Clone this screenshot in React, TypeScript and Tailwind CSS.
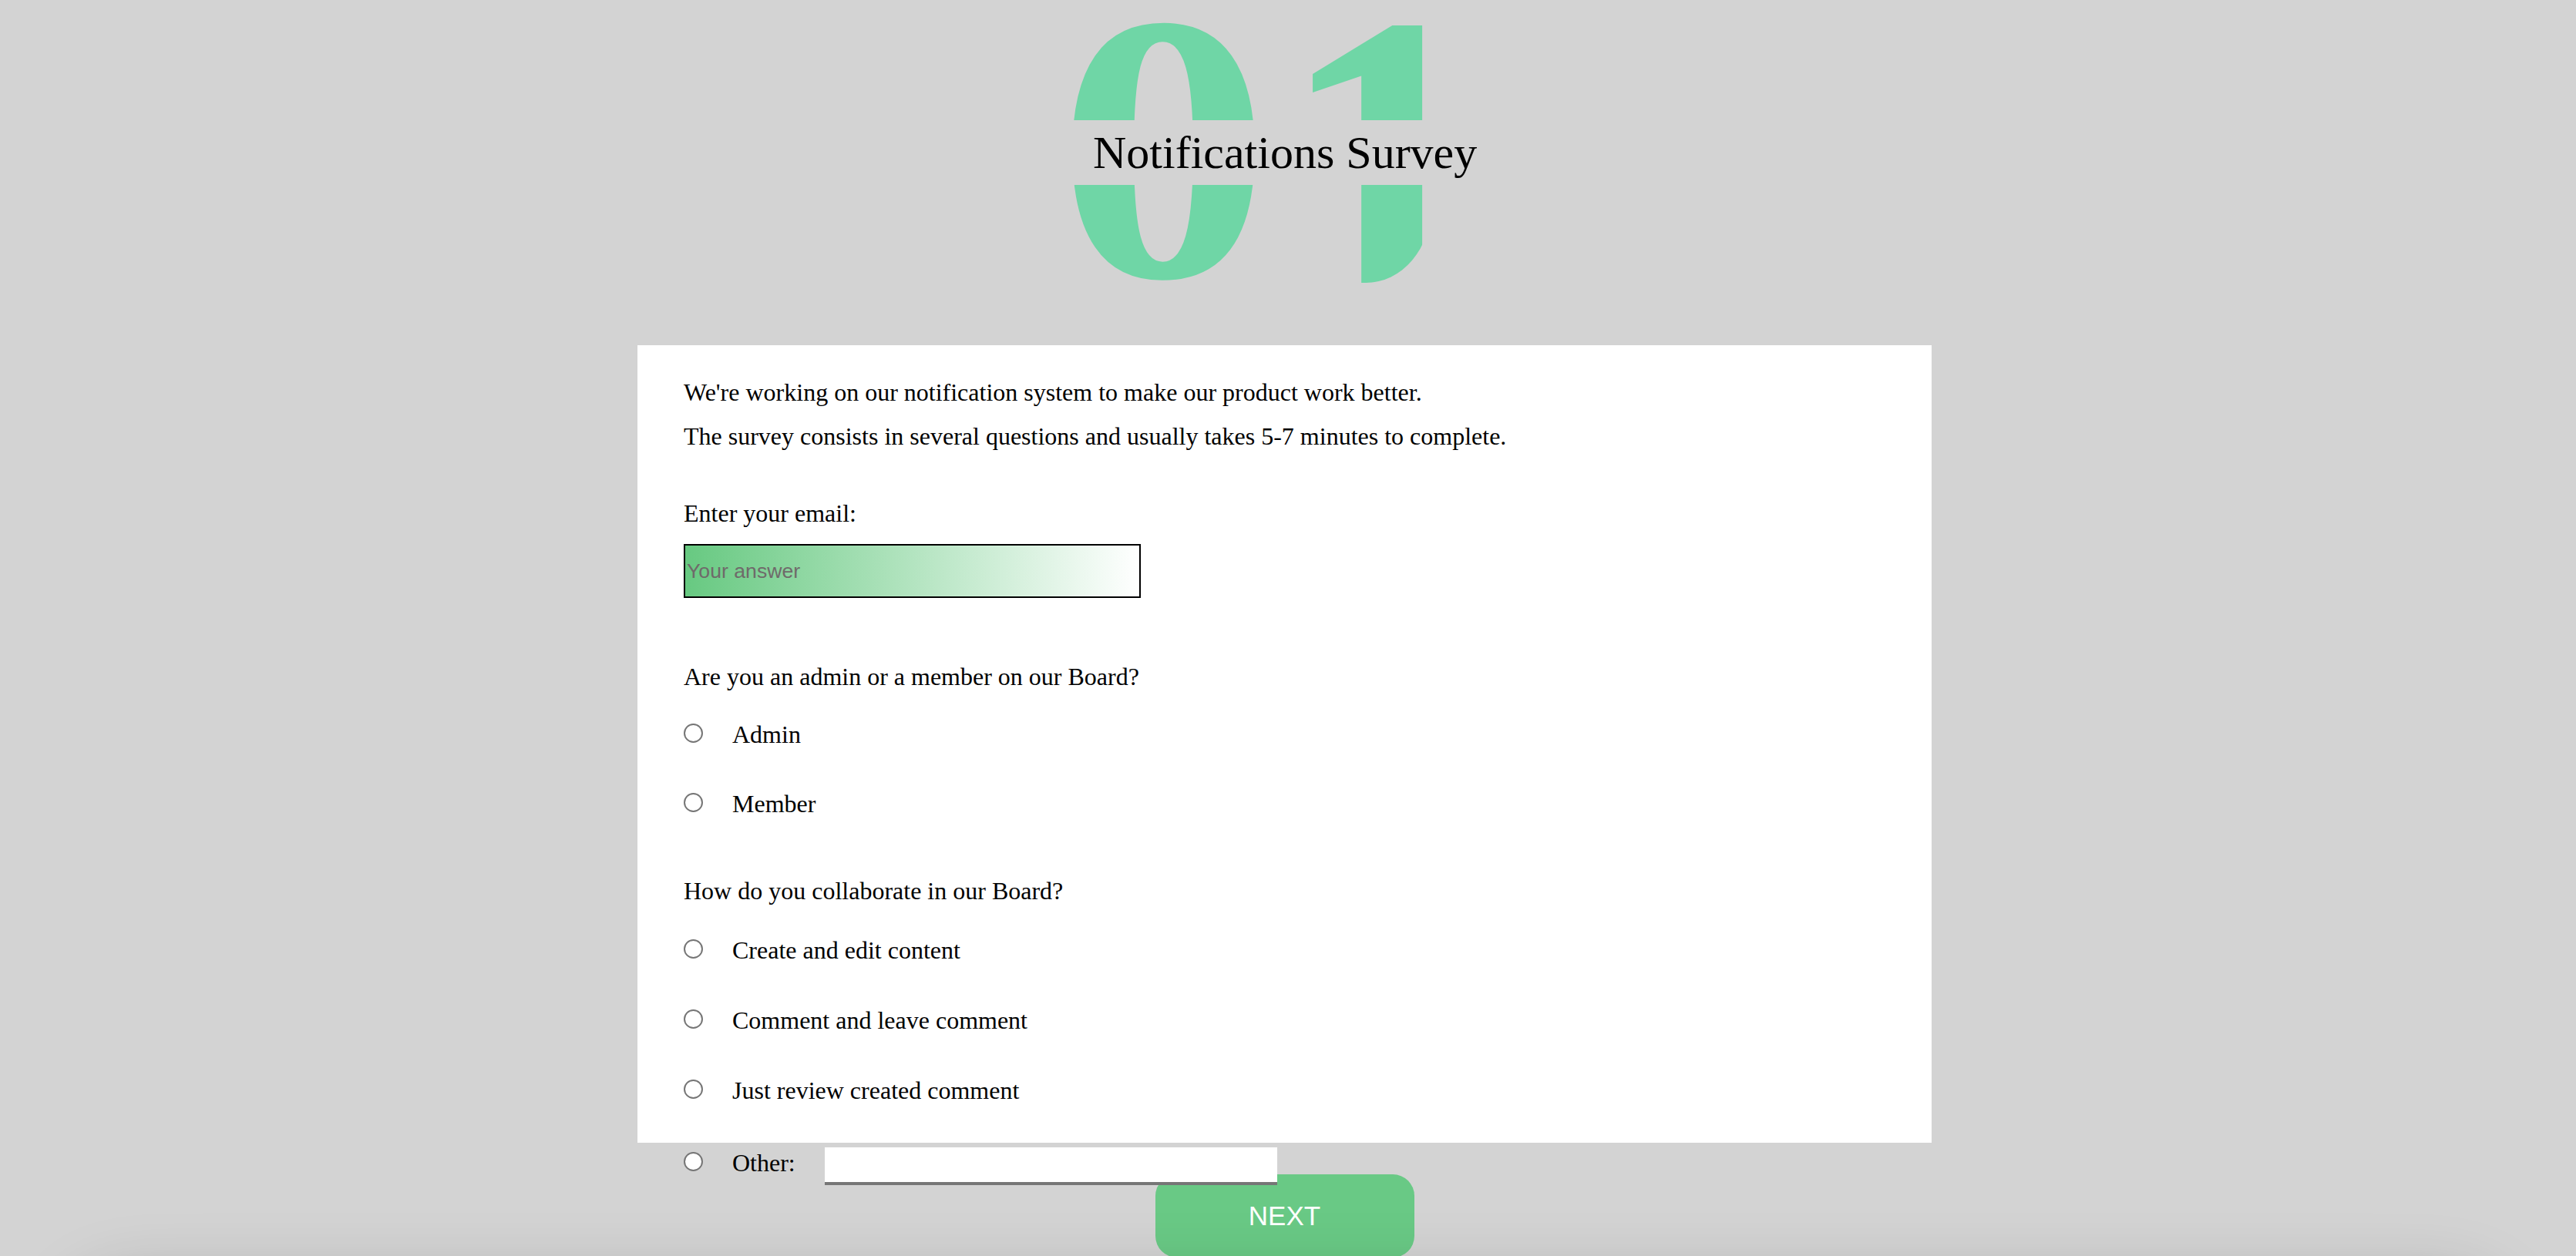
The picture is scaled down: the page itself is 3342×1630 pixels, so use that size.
import React from "react";

const serif = "font-['Liberation_Serif','Times_New_Roman',serif]";
const sans = "font-['Liberation_Sans',Arial,sans-serif]";

const Radio = ({ name }: { name: string }) => (
  <input
    type="radio"
    name={name}
    className="mt-[4px] mr-[38px] h-[25px] w-[25px] shrink-0 appearance-none rounded-full border-2 border-[#767676] bg-white"
  />
);

const Option = ({ name, label, className = "" }: { name: string; label: string; className?: string }) => (
  <label className={"flex items-start " + className}>
    <Radio name={name} />
    <span>{label}</span>
  </label>
);

export default function App() {
  return (
    <div className={"relative h-[1630px] overflow-hidden bg-[#d3d3d3] text-black " + serif}>
      <header className="relative h-[448px]">
        {/* big step number behind the title */}
        <div className="absolute left-[1370px] top-[-55px] flex items-start text-[495px] font-bold leading-none text-[#6fd6a6] select-none">
          <div className="h-[440px] w-[247px]">
            <span className="block origin-top-left scale-x-[1.127]">0</span>
          </div>
          <div className="ml-[41px] h-[422px] w-[199px] overflow-hidden rounded-br-[85px_100px]">
            <span className="block origin-[0_82px] scale-x-[1.13] scale-y-[1.17]">1</span>
          </div>
        </div>
        <h1 className="absolute left-[1370px] top-[156px] h-[84px] w-[560px] bg-[#d3d3d3] pl-[48px] text-[60px] font-normal leading-[84px] whitespace-nowrap">
          Notifications Survey
        </h1>
      </header>

      <div className="ml-[827px] w-[1679px]">
        <form className="h-[1035px] bg-white pl-[60px] pt-[43px] text-[32px] leading-[36px]">
          <p>We're working on our notification system to make our product work better.</p>
          <p className="mt-[21px]">The survey consists in several questions and usually takes 5-7 minutes to complete.</p>

          <label className="mt-[64px] block">Enter your email:</label>
          <input
            type="email"
            placeholder="Your answer"
            className={"mt-[22px] block h-[70px] w-[593px] border-2 border-black bg-[linear-gradient(to_right,#67c981,#ffffff)] pl-[2px] text-[26.67px] outline-none placeholder:text-[#6f6a6a] " + sans}
          />

          <p className="mt-[84px]">Are you an admin or a member on our Board?</p>
          <Option name="role" label="Admin" className="mt-[39px]" />
          <Option name="role" label="Member" className="mt-[54px]" />

          <p className="mt-[77px]">How do you collaborate in our Board?</p>
          <Option name="collab" label="Create and edit content" className="mt-[41px]" />
          <Option name="collab" label="Comment and leave comment" className="mt-[55px]" />
          <Option name="collab" label="Just review created comment" className="mt-[55px]" />
          <div className="mt-[58px] flex items-start">
            <Radio name="collab" />
            <span>Other:</span>
            <input
              type="text"
              className="relative z-10 -mt-[2px] ml-[38px] h-[49px] w-[587px] border-b-4 border-[#767676] bg-white outline-none"
            />
          </div>
        </form>

        <div className="mt-[41px] flex justify-center">
          <button className={"h-[108px] w-[336px] rounded-[28px] bg-[#69c985] text-[35px] text-white " + sans}>
            NEXT
          </button>
        </div>
      </div>

      <div className="pointer-events-none absolute left-[90px] right-[90px] top-[1665px] z-20 h-[200px] rounded-[80px] shadow-[0_0_90px_rgba(0,0,0,0.22)]" />
    </div>
  );
}
